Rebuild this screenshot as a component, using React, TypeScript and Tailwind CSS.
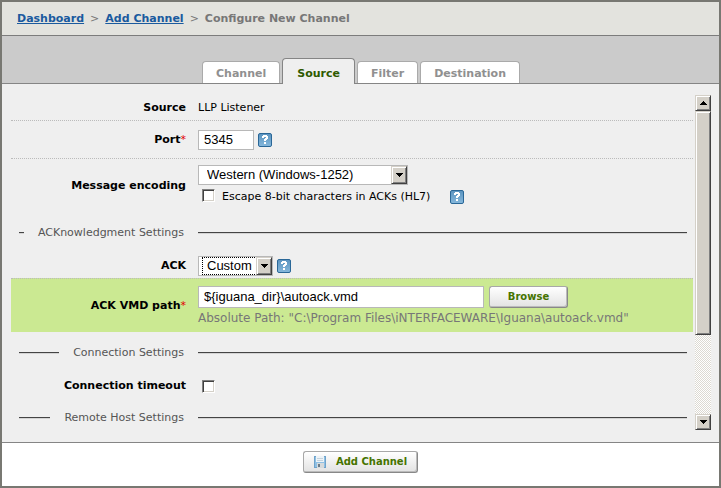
import type { ReactNode } from 'react';

const tabs = ['Channel', 'Source', 'Filter', 'Destination'];

function HelpButton({ label }: { label: string }) {
  return (
    <button type="button" aria-label={label} className="block h-3.5 w-3.5 shrink-0">
      <svg viewBox="0 0 14 14" width="14" height="14" aria-hidden>
        <defs>
          <linearGradient id="help-fill" x1="0" y1="0" x2="0" y2="1">
            <stop offset="0" stopColor="#5a93bf" />
            <stop offset="1" stopColor="#86b8dc" />
          </linearGradient>
        </defs>
        <rect x="0.5" y="0.5" width="13" height="13" rx="1.5" fill="url(#help-fill)" stroke="#2a6797" />
        <path d="M4 3h1V2h4v1h1v3H9v1H8v1H6V6h1V5h1V4H6v1H4z" fill="#fff" shapeRendering="crispEdges" />
        <rect x="6" y="9" width="2" height="2" fill="#fff" />
      </svg>
    </button>
  );
}

function Arrow({ up }: { up?: boolean }) {
  return (
    <svg viewBox="0 0 7 4" width="7" height="4" shapeRendering="crispEdges" aria-hidden>
      <path d={up ? 'M3 0h1v1h1v1h1v1h1v1H0V3h1V2h1V1h1z' : 'M0 0h7v1H6v1H5v1H4v1H3V3H2V2H1V1H0z'} fill="#000" />
    </svg>
  );
}

// Raised grey face shared by the drop-down arrows and the scrollbar parts.
const bevel =
  'border border-t-[#d4d0c8] border-l-[#d4d0c8] border-r-[#404040] border-b-[#404040] bg-[#d4d0c8] shadow-[inset_1px_1px_0_#fff,inset_-1px_-1px_0_#808080]';

function Select({ id, options, className, focused }: { id: string; options: string[]; className: string; focused?: boolean }) {
  return (
    <div className={`relative h-5 ${className}`}>
      <select
        id={id}
        className="block h-5 w-full appearance-none border border-[#b8b8b8] bg-white pl-2 font-['Liberation_Sans',Arial,sans-serif] text-[13px] leading-4 text-black outline-none"
      >
        {options.map((o) => (
          <option key={o}>{o}</option>
        ))}
      </select>
      {focused && <span className="pointer-events-none absolute inset-y-px right-4 left-1 border border-dotted border-black" />}
      <span className={`pointer-events-none absolute inset-y-px right-px grid w-4 place-items-center ${bevel}`}>
        <Arrow />
      </span>
    </div>
  );
}

function Checkbox({ id }: { id: string }) {
  return (
    <input
      id={id}
      type="checkbox"
      className="ml-1 block h-[13px] w-[13px] shrink-0 appearance-none self-start border border-t-[#808080] border-r-white border-b-white border-l-[#808080] bg-white shadow-[inset_1px_1px_0_#404040,inset_-1px_-1px_0_#d4d0c8] checked:bg-[#4a7a00]"
    />
  );
}

function Row({ label, htmlFor, required, className, children }: {
  label: string;
  htmlFor?: string;
  required?: boolean;
  className: string;
  children: ReactNode;
}) {
  const text = (
    <>
      {label}
      {required && <span className="font-normal text-[#e00000]">*</span>}
    </>
  );
  return (
    <div className={`grid grid-cols-[175px_1fr] items-center gap-x-3 ${className}`}>
      {htmlFor ? (
        <label htmlFor={htmlFor} className="text-right font-bold">{text}</label>
      ) : (
        <span className="text-right font-bold">{text}</span>
      )}
      <div className="min-w-0">{children}</div>
    </div>
  );
}

function SectionHeading({ title, className }: { title: string; className: string }) {
  const rule = 'h-0.5 border-t border-b border-t-[#444] border-b-[#d4d4d4]';
  return (
    <div className={`grid grid-cols-[173px_1fr] items-center gap-x-3.5 pr-1.5 ${className}`}>
      <div className="flex items-center gap-3.5 pl-2">
        <span className={`min-w-px flex-1 ${rule}`} />
        <h2 className="whitespace-nowrap text-[#555]">{title}</h2>
      </div>
      <span className={rule} />
    </div>
  );
}

const pushButton =
  'flex h-[22px] items-center justify-center rounded-[3px] border border-t-[#a8a8a8] border-l-[#a8a8a8] border-r-[#888] border-b-[#888] bg-linear-to-b from-white to-[#e2e2e2] text-[10px] font-bold text-[#457300] shadow-[inset_-1px_-1px_0_#bbb]';

export default function App() {
  return (
    <div className="flex min-h-screen flex-col border-2 border-[#787872] bg-white font-['DejaVu_Sans',Verdana,sans-serif] text-[11px] leading-4 text-black">
      <nav aria-label="Breadcrumb" className="flex h-[34px] items-center gap-1.5 border-b border-[#7c7c7c] bg-[#e3e3de] px-[15px] font-bold text-[#777]">
        <a href="#dashboard" className="text-[#1a5a9e] underline">Dashboard</a>
        <span className="font-normal">&gt;</span>
        <a href="#add-channel" className="text-[#1a5a9e] underline">Add Channel</a>
        <span className="font-normal">&gt;</span>
        <span>Configure New Channel</span>
      </nav>

      <div role="tablist" className="flex h-12 items-end gap-0.5 border-b border-[#858585] bg-[#cbcbcb] pl-[200px]">
        {tabs.map((tab) => {
          const active = tab === 'Source';
          return (
            <button
              key={tab}
              type="button"
              role="tab"
              aria-selected={active}
              className={
                active
                  ? '-mb-px h-[26px] rounded-t border border-b-0 border-[#858585] bg-[#efefef] px-3.5 pt-1 font-bold text-[#2e5a00]'
                  : 'h-[22px] rounded-t border border-b-0 border-[#aaa] bg-white px-[13px] pt-0.5 font-bold text-[#909090]'
              }
            >
              {tab}
            </button>
          );
        })}
      </div>

      <main className="flex flex-1 gap-0.5 border-b border-[#858585] bg-[#efefef] pt-[11px] pr-2 pb-1 pl-[9px]">
        <form className="min-w-0 flex-1">
          <Row label="Source" className="h-[26px] border-b border-dotted border-[#bbb]">LLP Listener</Row>

          <Row label="Port" htmlFor="port" required className="h-[38px] border-b border-dotted border-[#bbb]">
            <div className="flex items-center gap-1">
              <input id="port" defaultValue="5345" className="h-5 w-14 border border-[#b8b8b8] bg-white px-[5px] font-['Liberation_Sans',Arial,sans-serif] text-[13px]" />
              <HelpButton label="Help on port" />
            </div>
          </Row>

          <Row label="Message encoding" htmlFor="encoding" className="h-[54px]">
            <Select id="encoding" options={['Western (Windows-1252)', 'Unicode (UTF-8)']} className="w-[210px]" />
            <div className="flex items-center pt-1 pb-0.5">
              <Checkbox id="escape" />
              <label htmlFor="escape" className="pr-5 pl-[7px]">Escape 8-bit characters in ACKs (HL7)</label>
              <HelpButton label="Help on escaping" />
            </div>
          </Row>

          <SectionHeading title="ACKnowledgment Settings" className="h-10" />

          <Row label="ACK" htmlFor="ack" className="h-[25px]">
            <div className="flex items-center gap-1">
              <Select id="ack" options={['Custom', 'Fast']} className="w-[75px]" focused />
              <HelpButton label="Help on ACK" />
            </div>
          </Row>

          <Row label="ACK VMD path" htmlFor="vmd" required className="h-[54px] border-t border-dotted border-[#bbb] bg-[#cbe992]">
            <div className="flex items-center gap-[5px]">
              <input id="vmd" defaultValue="${iguana_dir}\autoack.vmd" className="h-[22px] w-[286px] border border-[#b8b8b8] bg-white px-[5px] font-['Liberation_Sans',Arial,sans-serif] text-[13px]" />
              <button type="button" className={`w-[79px] ${pushButton}`}>Browse</button>
            </div>
            <p className="pt-0.5 text-xs text-[#777]">Absolute Path: "C:\Program Files\iNTERFACEWARE\Iguana\autoack.vmd"</p>
          </Row>

          <SectionHeading title="Connection Settings" className="h-[42px]" />

          <Row label="Connection timeout" htmlFor="timeout" className="h-6">
            <Checkbox id="timeout" />
          </Row>

          <SectionHeading title="Remote Host Settings" className="h-10" />
        </form>

        <div className="mb-2 flex w-4 flex-col">
          <button type="button" aria-label="Scroll up" className={`grid h-4 shrink-0 place-items-center ${bevel}`}>
            <Arrow up />
          </button>
          <div className="flex-1 bg-[repeating-conic-gradient(#fff_0_25%,#dcd9d2_0_50%)] bg-size-[2px_2px]">
            <div className={`h-[74%] ${bevel}`} />
          </div>
          <button type="button" aria-label="Scroll down" className={`grid h-4 shrink-0 place-items-center ${bevel}`}>
            <Arrow />
          </button>
        </div>
      </main>

      <footer className="flex h-[43px] items-center justify-center pb-1.5">
        <button type="button" className={`w-[115px] gap-2.5 ${pushButton}`}>
          <svg viewBox="0 0 12 12" width="12" height="12" shapeRendering="crispEdges" aria-hidden>
            <rect width="12" height="12" fill="#6fa3cb" />
            <rect x="1" y="1" width="10" height="10" fill="#8fc0e4" />
            <rect x="2" y="0" width="8" height="6" fill="#eef4f8" />
            <rect x="3" y="2" width="6" height="1" fill="#c5d3dd" />
            <rect x="3" y="4" width="6" height="1" fill="#c5d3dd" />
            <rect x="3" y="7" width="7" height="5" fill="#d6dadc" />
            <rect x="4" y="8" width="2" height="3" fill="#6b7b88" />
          </svg>
          Add Channel
        </button>
      </footer>
    </div>
  );
}
